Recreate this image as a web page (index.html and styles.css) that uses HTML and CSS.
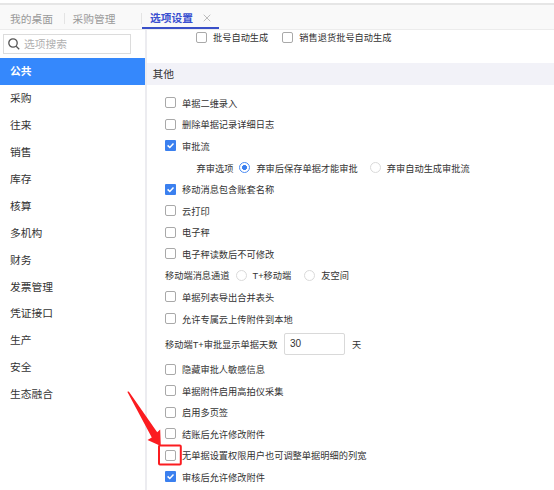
FILE: index.html
```html
<!DOCTYPE html>
<html lang="zh-CN">
<head>
<meta charset="utf-8">
<title>选项设置</title>
<link rel="stylesheet" href="styles.css">
</head>
<body>
<header class="tabs">
  <div class="tab tab-home">我的桌面</div>
  <div class="tab tab-purchase">采购管理</div>
  <div class="tab tab-active">选项设置<svg class="close" viewBox="0 0 8 8"><path d="M.7.7l6.6 6.6M7.3.7L.7 7.3"/></svg></div>
</header>
<div class="layout">
  <aside class="sidebar">
    <div class="search"><svg class="search-icon" viewBox="0 0 12 12"><circle cx="5" cy="5" r="4.2"/><path d="M8.2 8.2l3 3"/></svg><span>选项搜索</span></div>
    <nav class="menu">
      <div class="item item-active">公共</div>
      <div class="item">采购</div>
      <div class="item">往来</div>
      <div class="item">销售</div>
      <div class="item">库存</div>
      <div class="item">核算</div>
      <div class="item">多机构</div>
      <div class="item">财务</div>
      <div class="item">发票管理</div>
      <div class="item">凭证接口</div>
      <div class="item">生产</div>
      <div class="item">安全</div>
      <div class="item">生态融合</div>
    </nav>
  </aside>
  <main class="content">
    <div class="batch">
      <label class="option"><i class="box"></i>批号自动生成</label>
      <label class="option"><i class="box"></i>销售退货批号自动生成</label>
    </div>
    <h2 class="section">其他</h2>
    <div class="rows">
      <div class="row"><i class="box"></i>单据二维录入</div>
      <div class="row"><i class="box"></i>删除单据记录详细日志</div>
      <div class="row"><i class="box checked"><svg viewBox="0 0 11 11"><path d="M2.6 5.4l2.2 2.1 3.7-4"/></svg></i>审批流</div>
      <div class="row row-nested"><span>弃审选项</span><i class="radio selected"></i><span class="choice">弃审后保存单据才能审批</span><i class="radio"></i>弃审自动生成审批流</div>
      <div class="row"><i class="box checked"><svg viewBox="0 0 11 11"><path d="M2.6 5.4l2.2 2.1 3.7-4"/></svg></i>移动消息包含账套名称</div>
      <div class="row"><i class="box"></i>云打印</div>
      <div class="row"><i class="box"></i>电子秤</div>
      <div class="row"><i class="box"></i>电子秤读数后不可修改</div>
      <div class="row row-channel"><span>移动端消息通道</span><i class="radio"></i><span class="choice">T+移动端</span><i class="radio"></i>友空间</div>
      <div class="row"><i class="box"></i>单据列表导出合并表头</div>
      <div class="row"><i class="box"></i>允许专属云上传附件到本地</div>
      <div class="row row-days"><span class="days-label">移动端T+审批显示单据天数</span><span class="days">30</span>天</div>
      <div class="row"><i class="box"></i>隐藏审批人敏感信息</div>
      <div class="row"><i class="box"></i>单据附件启用高拍仪采集</div>
      <div class="row"><i class="box"></i>启用多页签</div>
      <div class="row"><i class="box"></i>结账后允许修改附件</div>
      <div class="row"><i class="box"></i>无单据设置权限用户也可调整单据明细的列宽</div>
      <div class="row"><i class="box checked"><svg viewBox="0 0 11 11"><path d="M2.6 5.4l2.2 2.1 3.7-4"/></svg></i>审核后允许修改附件</div>
    </div>
  </main>
</div>
<svg class="callout" viewBox="0 0 554 490">
  <path class="arrow" d="M127.3 391.8L128.8 391.4 157.2 432.2 160.2 429.5 160.8 446 147.5 440 151.8 437.5Z"/>
  <rect class="frame" x="159" y="445.6" width="21.8" height="18.8" rx="1"/>
</svg>
</body>
</html>
```

FILE: styles.css
```css
* { box-sizing: border-box; }
body {
  margin: 0;
  width: 554px;
  height: 490px;
  overflow: hidden;
  position: relative;
  background: #fff;
  color: #333;
  font-family: "Liberation Sans", "Noto Sans CJK SC", sans-serif;
  font-size: 9.22px;
}
.tabs {
  height: 30px;
  padding-top: 5px;
  display: flex;
  background: linear-gradient(#fff 3px, #e6e6e6 3px, #e6e6e6 5px, #f9f9f9 5px);
  border-bottom: 1px solid #ececec;
  font-size: 10.75px;
  color: #999;
}
.tab {
  display: flex;
  align-items: center;
  height: 24px;
  padding-top: 2px;
  white-space: nowrap;
}
.tab-home { width: 65px; padding-left: 10px; }
.tab-purchase { width: 77px; padding-left: 7.5px; }
.tab-home, .tab-purchase {
  background: linear-gradient(#e4e4e4, #e4e4e4) right 8px / 1px 11px no-repeat;
}
.tab-active {
  width: 77px;
  padding-left: 8px;
  color: #3a50d0;
  font-weight: 700;
  border-bottom: 2px solid #3a50c8;
  padding-top: 3px;
}
.close { width: 8px; height: 8px; margin-left: 10px; flex: none; }
.close path { stroke: #bcbcbc; stroke-width: 1; fill: none; }
.layout { display: flex; height: 460px; }
.sidebar { width: 147px; border-right: 2px solid #ececf0; padding-top: 4px; }
.search {
  width: 128px;
  height: 20px;
  margin-left: 3px;
  padding-left: 4px;
  border: 1px solid #dcdcdc;
  display: flex;
  align-items: center;
  gap: 4px;
  color: #b0b0b0;
  font-size: 10.75px;
  line-height: 14px;
}
.search span { padding-bottom: 1px; }
.search-icon { width: 12px; height: 12px; }
.search-icon circle, .search-icon path { fill: none; stroke: #555; stroke-width: 1.3; }
.menu { margin-top: 4px; font-size: 10.75px; }
.item { height: 26.95px; line-height: 26px; padding-left: 10px; }
.item-active { background: #3588fc; color: #fff; font-weight: 700; }
.content { flex: 1; }
.batch { display: flex; gap: 14px; padding-left: 49px; height: 33px; }
.option { display: flex; align-items: center; height: 14px; }
.section {
  margin: 0;
  height: 22px;
  line-height: 22px;
  padding-left: 5.5px;
  background: #f2f2f8;
  font-size: 10.75px;
  font-weight: 400;
}
.rows { padding: 7px 0 0 18px; }
.row { height: 21.58px; display: flex; align-items: center; white-space: nowrap; }
.box {
  width: 11px;
  height: 11px;
  margin-right: 6px;
  flex: none;
  border: 1px solid #a9a9a9;
  border-radius: 2px;
  background: #fff;
}
.checked { border: 0; border-radius: 1px; background: #3b80ef; }
.checked svg { display: block; width: 11px; height: 11px; }
.checked path { fill: none; stroke: #fff; stroke-width: 1.5; }
.radio {
  width: 11px;
  height: 11px;
  margin: 0 6px;
  flex: none;
  border: 1px solid #dadada;
  border-radius: 50%;
}
.selected { border-color: #4b8cf4; background: radial-gradient(circle, #3b80ef 2.2px, #fff 2.8px); }
.choice { margin-right: 6px; }
.row-nested { padding-left: 31.5px; }
.row-channel .choice { margin-right: 7px; }
.row-days { height: 28.9px; }
.days-label { width: 119px; }
.days {
  width: 61px;
  height: 22px;
  margin-right: 7px;
  padding-left: 5px;
  border: 1px solid #d9d9d9;
  border-radius: 2px;
  font-size: 10px;
  line-height: 20px;
}
.callout { position: absolute; left: 0; top: 0; width: 554px; height: 490px; }
.arrow { fill: #fb1c20; }
.frame { fill: none; stroke: #fb1c20; stroke-width: 2; }
```
